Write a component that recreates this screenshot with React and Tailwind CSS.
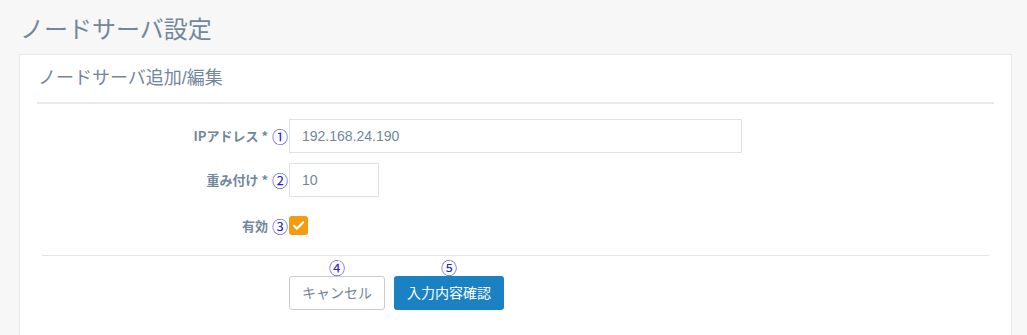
import React from 'react';

const font = { fontFamily: '"Liberation Sans", "Noto Sans CJK JP", sans-serif' };
const jp = { fontFamily: '"Noto Sans CJK JP", "Liberation Sans", sans-serif' };

const Num = ({ children }) => (
    <span className="text-[#2323d4] text-[16px] font-normal leading-none" style={jp}>{children}</span>
);

const Label = ({ children, num }) => (
    <div className="w-[252px] flex items-center justify-end gap-[4px] text-[13px] font-bold text-[#73879C] pr-[1px]" style={jp}>
        <span className="whitespace-pre">{children}</span>
        <Num>{num}</Num>
    </div>
);

const App = () => {
    return (
        <div className="min-h-[335px] bg-[#f7f7f7] pl-[19px] pr-[15px] pt-[14px]" style={font}>
            {/* Page title */}
            <h1 className="h-[32px] leading-[32px] text-[24px] text-[#73879C] font-normal pl-[1px] mb-[8px]">
                ノードサーバ設定
            </h1>

            {/* Panel */}
            <div className="bg-white border border-[#E6E9ED] border-b-0 px-[17px] pt-[11px] pb-[25px] min-h-[281px]">
                <div className="border-b-2 border-[#E6E9ED] pb-[12px] pl-[1px]">
                    <h2 className="text-[18px] leading-[24px] text-[#73879C] font-normal">ノードサーバ追加/編集</h2>
                </div>

                <div className="mt-[15px] flex flex-col">
                    <div className="flex items-center">
                        <Label num="①">IPアドレス *</Label>
                        <input
                            type="text"
                            defaultValue="192.168.24.190"
                            className="w-[453px] h-[34px] border border-[#DDE2E8] px-[12px] text-[14px] text-[#73879C] outline-none"
                        />
                    </div>
                    <div className="flex items-center mt-[10px]">
                        <Label num="②">重み付け *</Label>
                        <input
                            type="text"
                            defaultValue="10"
                            className="w-[90px] h-[34px] border border-[#DDE2E8] px-[12px] text-[14px] text-[#73879C] outline-none"
                        />
                    </div>
                    <div className="flex items-center mt-[19px]">
                        <Label num="③">有効</Label>
                        <span className="w-[19px] h-[19px] rounded-[3px] bg-[#F39C12] flex items-center justify-center">
                            <svg width="13" height="13" viewBox="0 0 13 13" fill="none">
                                <path d="M2 6.8 L5 9.6 L11 3.4" stroke="white" strokeWidth="2.2" strokeLinecap="round" strokeLinejoin="round" />
                            </svg>
                        </span>
                    </div>
                </div>

                <div className="mt-[19px] mx-[5px] border-t border-[#E5E5E5]"></div>

                <div className="flex gap-[9px] ml-[252px] mt-[3px]">
                    <div className="flex flex-col items-center">
                        <div className="h-[17px] flex items-center"><Num>④</Num></div>
                        <button className="w-[96px] h-[34px] border border-[#CCCCCC] rounded-[3px] bg-white text-[14px] text-[#73879C]" style={jp}>
                            キャンセル
                        </button>
                    </div>
                    <div className="flex flex-col items-center">
                        <div className="h-[17px] flex items-center"><Num>⑤</Num></div>
                        <button className="w-[110px] h-[34px] rounded-[3px] bg-[#1A82C3] text-[14px] text-white" style={jp}>
                            入力内容確認
                        </button>
                    </div>
                </div>
            </div>
        </div>
    );
};

export default App;
